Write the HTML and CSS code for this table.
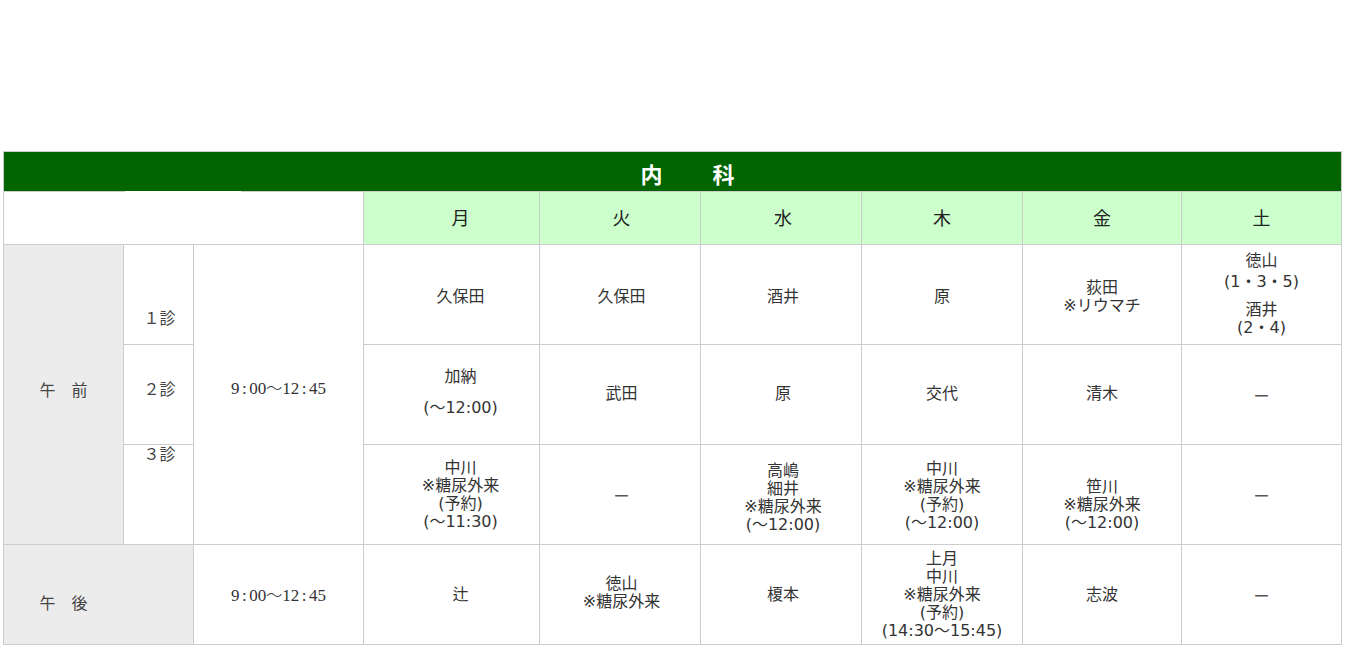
FILE: index.html
```html
<!DOCTYPE html>
<html lang="ja">
<head>
<meta charset="utf-8">
<title>内科 外来担当表</title>
<link rel="stylesheet" href="styles.css">
</head>
<body>
<div class="page">
  <div class="sched">
    <div class="title">内　　科</div>

    <div class="corner"></div>
    <div class="day mon">月</div>
    <div class="day tue">火</div>
    <div class="day wed">水</div>
    <div class="day">木</div>
    <div class="day">金</div>
    <div class="day">土</div>

    <div class="label am">午　前</div>
    <div class="shin s1">１診</div>
    <div class="time t-am"><span>9<span class="colon">:</span>00<span class="wave">～</span>12<span class="colon">:</span>45</span></div>
    <div class="cell r1 mon">久保田</div>
    <div class="cell r1 tue">久保田</div>
    <div class="cell r1 wed">酒井</div>
    <div class="cell r1">原</div>
    <div class="cell r1"><span>荻田</span><span>※リウマチ</span></div>
    <div class="cell sat">
      <div class="grp first"><span>徳山</span><span>(1・3・5)</span></div>
      <div class="grp"><span>酒井</span><span>(2・4)</span></div>
    </div>

    <div class="shin s2">２診</div>
    <div class="cell mon up5"><span>加納</span><span class="late">(～12:00)</span></div>
    <div class="cell tue r2">武田</div>
    <div class="cell wed r2">原</div>
    <div class="cell r2">交代</div>
    <div class="cell r2">清木</div>
    <div class="cell dash">ー</div>

    <div class="shin s3">３診</div>
    <div class="cell mon"><span>中川</span><span>※糖尿外来</span><span>(予約)</span><span>(～11:30)</span></div>
    <div class="cell tue dash">ー</div>
    <div class="cell wed down3"><span>高嶋</span><span>細井</span><span>※糖尿外来</span><span>(～12:00)</span></div>
    <div class="cell down1"><span>中川</span><span>※糖尿外来</span><span>(予約)</span><span>(～12:00)</span></div>
    <div class="cell down10"><span>笹川</span><span>※糖尿外来</span><span>(～12:00)</span></div>
    <div class="cell dash">ー</div>

    <div class="label pm">午　後</div>
    <div class="time t-pm"><span>9<span class="colon">:</span>00<span class="wave">～</span>12<span class="colon">:</span>45</span></div>
    <div class="cell mon">辻</div>
    <div class="cell tue up2"><span>徳山</span><span>※糖尿外来</span></div>
    <div class="cell wed">榎本</div>
    <div class="cell"><span>上月</span><span>中川</span><span>※糖尿外来</span><span>(予約)</span><span>(14:30～15:45)</span></div>
    <div class="cell">志波</div>
    <div class="cell dash">ー</div>
  </div>
</div>
</body>
</html>
```

FILE: styles.css
```css
html, body {
  margin: 0;
  padding: 0;
  background: #fff;
}

.page {
  padding: 151px 0 0 3px;
}

.sched {
  display: grid;
  grid-template-columns: 120px 70px 170px 176px 161px 161px 161px 159px 160px;
  grid-template-rows: 40px 53px 100px 100px 100px 100px;
  width: 1339px;
  box-sizing: border-box;
  border-top: 1px solid #ccc;
  border-left: 1px solid #ccc;
  font-family: "DejaVu Sans", "Noto Sans CJK JP", sans-serif;
  font-size: 16px;
  line-height: 18px;
  color: #333;
}

.sched > div {
  box-sizing: border-box;
  border-right: 1px solid #ccc;
  border-bottom: 1px solid #ccc;
  display: flex;
  flex-direction: column;
  align-items: center;
  justify-content: center;
  text-align: center;
}

.sched > .title {
  grid-column: 1 / -1;
  border-bottom: none;
  padding-left: 32px;
  padding-top: 1px;
  background:
    linear-gradient(to right, #ccc 121px, #fff 121px 237px, #ccc 237px) bottom / 100% 1px no-repeat,
    #006400;
  color: #fff;
  font-family: "Noto Sans CJK JP", sans-serif;
  font-weight: bold;
  font-size: 22px;
  letter-spacing: 2px;
}

.sched > .corner {
  grid-column: span 3;
}

.sched > .day {
  background: #ccffcc;
  font-family: "Noto Sans CJK JP", sans-serif;
  font-size: 18px;
  color: #222;
  padding-bottom: 3px;
}

.sched > .label {
  background: #ececec;
  font-family: "Noto Sans CJK JP", sans-serif;
  color: #444;
}

.sched > .am {
  grid-row: span 3;
  padding-bottom: 12px;
}

.sched > .pm {
  grid-column: span 2;
  padding-top: 15px;
  padding-right: 70px;
}

.sched > .shin {
  font-family: "Noto Sans CJK JP", sans-serif;
  color: #444;
  padding-left: 2px;
}

.sched > .s1 {
  padding-top: 44px;
}

.sched > .s2 {
  padding-bottom: 13px;
}

.sched > .s3 {
  justify-content: flex-start;
  line-height: 16px;
}

.sched > .time {
  font-family: "Liberation Serif", "Noto Sans CJK JP", serif;
  font-size: 17px;
  color: #333;
}

.time .colon {
  margin: 0 2.5px;
}

.time .wave {
  font-family: "Noto Sans CJK JP", sans-serif;
  font-size: 16px;
  font-weight: 300;
}

.sched > .t-am {
  grid-row: span 3;
  padding-bottom: 13px;
}

.sched > .mon {
  padding-left: 18px;
}

.sched > .tue {
  padding-left: 3px;
}

.sched > .wed {
  padding-left: 4px;
}

.sched > .r1 {
  padding-top: 4px;
}

.sched > .r2 {
  padding-bottom: 2px;
}

.sched > .up5 {
  padding-bottom: 5px;
}

.sched > .up2 {
  padding-bottom: 3px;
}

.sched > .down1 {
  padding-top: 2px;
}

.sched > .down3 {
  padding-top: 6px;
}

.sched > .down10 {
  padding-top: 20px;
}

.cell span {
  display: block;
}

.cell .late {
  margin-top: 13px;
}

.grp {
  display: flex;
  flex-direction: column;
  align-items: center;
}

.grp.first span:first-child {
  margin-bottom: 3px;
}

.grp + .grp {
  margin-top: 10px;
}

.dash {
  font-family: "Noto Sans CJK JP", sans-serif;
  color: #555;
}
```
